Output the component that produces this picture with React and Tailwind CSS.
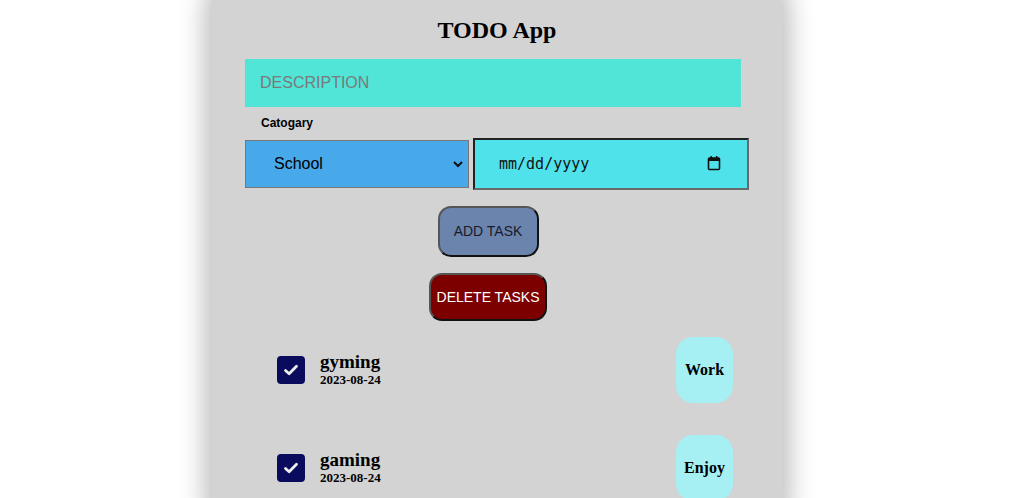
import { useState } from 'react';

const tasks = [
  { name: 'gyming', date: '2023-08-24', tag: 'Work' },
  { name: 'gaming', date: '2023-08-24', tag: 'Enjoy' },
];

function CheckBox({ checked, onClick }) {
  return (
    <button
      onClick={onClick}
      className="w-[28px] h-[28px] rounded-[4px] bg-[#0b0b5e] flex items-center justify-center shrink-0"
    >
      {checked && (
        <svg width="18" height="18" viewBox="0 0 18 18" fill="none">
          <path d="M3.5 9.5l3.6 3.3L14.5 5.2" stroke="#ececec" strokeWidth="2.8" strokeLinecap="round" strokeLinejoin="round" />
        </svg>
      )}
    </button>
  );
}

export default function App() {
  const [done, setDone] = useState([true, true]);

  return (
    <div className="w-[1033px] h-[498px] overflow-hidden bg-white">
      <div className="ml-[212px] w-[570px] -mt-[24px] pt-[24px] h-[560px] rounded-[36px] bg-[#d3d3d3] shadow-[0_0_24px_8px_rgba(0,0,0,0.25)]">
        <h1 className="text-center text-[24px] font-bold leading-none pt-[18px] text-black" style={{ fontFamily: '"Liberation Serif", serif' }}>
          TODO App
        </h1>

        <div className="pl-[33px] pt-[17px]" style={{ fontFamily: '"Liberation Sans", Arial, sans-serif' }}>
          <input
            placeholder="DESCRIPTION"
            className="block w-[496px] h-[48px] bg-[#50e5d7] pl-[15px] text-[16px] outline-none placeholder:text-[#7a7a7a]"
          />
          <div className="pl-[16px] pt-[9px] text-[12px] font-bold leading-[14px] text-black">Catogary</div>
          <div className="flex items-center gap-[4px] pt-[8px]">
            <div className="relative w-[224px] h-[48px] bg-[#47a8ea] border border-[#777] flex items-center">
              <span className="pl-[28px] text-[16px] text-black">School</span>
              <svg className="absolute right-[4px] top-[18px]" width="12" height="10" viewBox="0 0 12 10">
                <path d="M2 3l4 4 4-4" stroke="#111" strokeWidth="2" fill="none" />
              </svg>
            </div>
            <div className="relative w-[276px] h-[52px] bg-[#4fe2eb] border-2 border-t-[#222] border-l-[#222] border-b-[#6a6a6a] border-r-[#6a6a6a] flex items-center">
              <span className="pl-[24px] text-[15px] text-[#111]" style={{ fontFamily: '"DejaVu Sans Mono", monospace' }}>
                mm/dd/yyyy
              </span>
              <svg className="absolute right-[26px] top-[15px]" width="14" height="16" viewBox="0 0 14 16">
                <rect x="1.5" y="3" width="11" height="11.5" rx="1" stroke="#111" strokeWidth="1.6" fill="none" />
                <rect x="1.5" y="3" width="11" height="3" fill="#111" />
                <rect x="3.5" y="1" width="1.6" height="3" fill="#111" />
                <rect x="8.9" y="1" width="1.6" height="3" fill="#111" />
              </svg>
            </div>
          </div>

          <div className="flex flex-col items-center w-[486px] pt-[16px]">
            <button className="w-[101px] h-[51px] rounded-[13px] bg-[#6a84ae] border-2 border-t-[#555] border-l-[#555] border-b-[#111] border-r-[#111] text-[14px] text-[#1a1a2a]">
              ADD TASK
            </button>
            <button className="mt-[16px] w-[118px] h-[48px] rounded-[13px] bg-[#7d0000] border-2 border-t-[#555] border-l-[#555] border-b-[#111] border-r-[#111] text-[14px] text-white">
              DELETE TASKS
            </button>
          </div>
        </div>

        <div className="pt-[16px] pl-[65px] pr-[49px]" style={{ fontFamily: '"Liberation Serif", serif' }}>
          {tasks.map((t, i) => (
            <div key={t.name} className="flex items-center h-[66px] mb-[32px]">
              <CheckBox
                checked={done[i]}
                onClick={() => setDone(done.map((d, j) => (j === i ? !d : d)))}
              />
              <div className="pl-[15px] flex flex-col -mt-[1px]">
                <span className="text-[19px] font-bold leading-[20px] text-black">{t.name}</span>
                <span className="text-[13px] font-bold leading-[15px] text-black">{t.date}</span>
              </div>
              <div className="ml-auto w-[57px] h-[66px] rounded-[17px] bg-[#a6eff3] flex items-center justify-center text-[16px] font-bold text-black">
                {t.tag}
              </div>
            </div>
          ))}
        </div>
      </div>
    </div>
  );
}
